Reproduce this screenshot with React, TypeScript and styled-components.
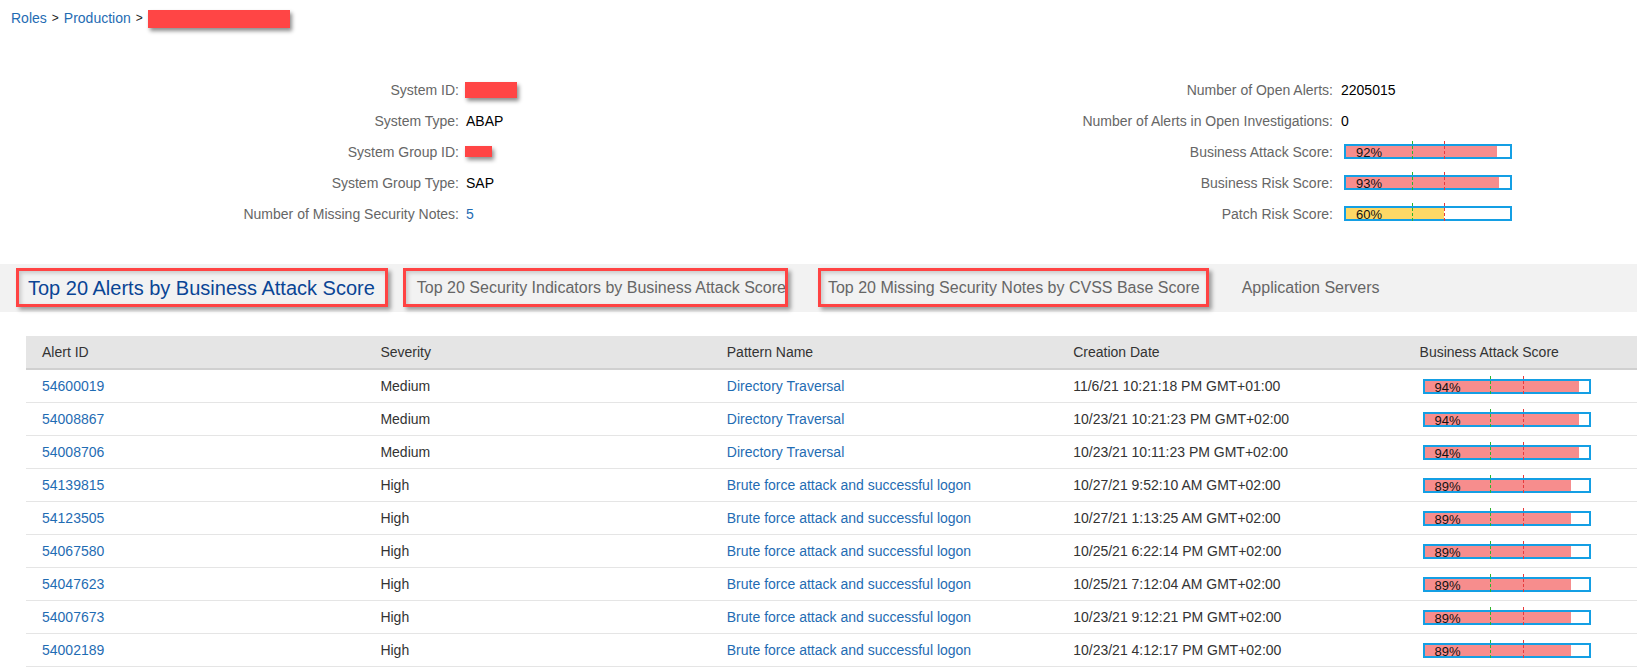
import React from "react";
import styled, { createGlobalStyle } from "styled-components";

const LINK = "#1f6cb3";

const GlobalStyle = createGlobalStyle`
  html, body {
    margin: 0;
    padding: 0;
    background: #ffffff;
  }
  body {
    font-family: "Liberation Sans", Arial, Helvetica, sans-serif;
    font-size: 14px;
    color: #333333;
    overflow: hidden;
  }
`;

const Page = styled.div`
  width: 1637px;
  height: 670px;
  overflow: hidden;
`;

/* ---------- breadcrumb ---------- */
const Breadcrumbs = styled.nav`
  display: flex;
  align-items: center;
  height: 36px;
  padding-left: 11px;
  box-sizing: border-box;
  font-size: 14px;
  line-height: 18px;
`;

const Crumb = styled.a`
  color: ${LINK};
  text-decoration: none;
`;

const Sep = styled.span`
  color: #222;
  font-size: 12px;
  margin: 0 5px;
`;

const Redacted = styled.span<{ $w: number; $h: number; $shift?: number }>`
  display: inline-block;
  width: ${(p) => p.$w}px;
  height: ${(p) => p.$h}px;
  margin-top: ${(p) => p.$shift ?? 0}px;
  margin-left: ${(p) => (p.$shift === undefined ? -1 : 0)}px;
  background: #ff4545;
  box-shadow: 2px 3px 4px rgba(0, 0, 0, 0.45);
`;

/* ---------- info section ---------- */
const InfoSection = styled.section`
  display: flex;
  margin-top: 38px;
`;

const InfoGrid = styled.div<{ $width: number; $labelWidth: number; $gap: number }>`
  width: ${(p) => p.$width}px;
  display: grid;
  grid-template-columns: ${(p) => p.$labelWidth}px 1fr;
  column-gap: ${(p) => p.$gap}px;
  grid-auto-rows: 31px;
  align-items: center;
`;

const Label = styled.div`
  text-align: right;
  color: #666666;
  white-space: nowrap;
`;

const Value = styled.div<{ $link?: boolean }>`
  display: flex;
  align-items: center;
  color: ${(p) => (p.$link ? LINK : "#000000")};
  white-space: nowrap;
`;

/* ---------- score bar ---------- */
const ScoreBar = styled.div`
  position: relative;
  width: 164px;
  height: 11px;
  margin-left: 3px;
  border: 2px solid #149fe4;
  background: #ffffff;
`;

const ScoreFill = styled.div<{ $color: string }>`
  height: 100%;
  background: ${(p) => p.$color};
`;

const ScoreText = styled.span`
  position: absolute;
  left: 10px;
  top: 0;
  font-size: 13px;
  line-height: 13px;
  color: #111111;
`;

const Threshold = styled.span<{ $at: number; $color: string }>`
  position: absolute;
  left: ${(p) => p.$at}%;
  top: -5px;
  bottom: -4px;
  width: 1px;
  background: repeating-linear-gradient(
    to bottom,
    ${(p) => p.$color} 0 3px,
    transparent 3px 5px
  );
`;

const Score: React.FC<{ value: number; color?: string }> = ({ value, color = "#f78d8d" }) => (
  <ScoreBar>
    <ScoreFill $color={color} style={{ width: `${value}%` }} />
    <ScoreText>{value}%</ScoreText>
    <Threshold $at={40} $color="#2db52d" />
    <Threshold $at={60} $color="#e8393d" />
  </ScoreBar>
);

/* ---------- tabs ---------- */
const TabBar = styled.div`
  margin-top: 35px;
  height: 48px;
  background: #f2f2f2;
  display: flex;
  align-items: stretch;
  padding-left: 7px;
`;

const Tab = styled.div<{ $selected?: boolean }>`
  position: relative;
  display: flex;
  align-items: center;
  padding: 0 21px;
  font-size: ${(p) => (p.$selected ? "20px" : "16px")};
  color: ${(p) => (p.$selected ? "#0a4595" : "#666666")};
  white-space: nowrap;
  cursor: pointer;
`;

const Highlight = styled.span<{ $l: number; $r: number }>`
  position: absolute;
  left: ${(p) => p.$l}px;
  right: ${(p) => p.$r}px;
  top: 4px;
  bottom: 5px;
  border: 3px solid #ff4343;
  box-shadow: 3px 3px 4px rgba(0, 0, 0, 0.35), inset 2px 2px 4px rgba(0, 0, 0, 0.18);
  pointer-events: none;
`;

/* ---------- table ---------- */
const Table = styled.div`
  margin: 24px 0 0 26px;
  width: 1732px;
`;

const HeaderRow = styled.div`
  display: grid;
  grid-template-columns: repeat(5, 346.4px);
  height: 32px;
  align-items: center;
  background: #e5e5e5;
  border-bottom: 2px solid #d0d0d0;
  color: #333333;
`;

const Row = styled.div`
  display: grid;
  grid-template-columns: repeat(5, 346.4px);
  height: 32px;
  align-items: center;
  border-bottom: 1px solid #e5e5e5;
`;

const Cell = styled.div<{ $first?: boolean; $link?: boolean }>`
  display: flex;
  align-items: center;
  padding-left: ${(p) => (p.$first ? 16 : 8)}px;
  color: ${(p) => (p.$link ? LINK : "#333333")};
  white-space: nowrap;
`;

const alerts = [
  ["54600019", "Medium", "Directory Traversal", "11/6/21 10:21:18 PM GMT+01:00", 94],
  ["54008867", "Medium", "Directory Traversal", "10/23/21 10:21:23 PM GMT+02:00", 94],
  ["54008706", "Medium", "Directory Traversal", "10/23/21 10:11:23 PM GMT+02:00", 94],
  ["54139815", "High", "Brute force attack and successful logon", "10/27/21 9:52:10 AM GMT+02:00", 89],
  ["54123505", "High", "Brute force attack and successful logon", "10/27/21 1:13:25 AM GMT+02:00", 89],
  ["54067580", "High", "Brute force attack and successful logon", "10/25/21 6:22:14 PM GMT+02:00", 89],
  ["54047623", "High", "Brute force attack and successful logon", "10/25/21 7:12:04 AM GMT+02:00", 89],
  ["54007673", "High", "Brute force attack and successful logon", "10/23/21 9:12:21 PM GMT+02:00", 89],
  ["54002189", "High", "Brute force attack and successful logon", "10/23/21 4:12:17 PM GMT+02:00", 89],
] as const;

export default function App() {
  return (
    <Page>
      <GlobalStyle />
      <Breadcrumbs>
        <Crumb href="#">Roles</Crumb>
        <Sep>&gt;</Sep>
        <Crumb href="#">Production</Crumb>
        <Sep>&gt;</Sep>
        <Redacted $w={142} $h={18} $shift={2} />
      </Breadcrumbs>

      <InfoSection>
        <InfoGrid $width={818} $labelWidth={459} $gap={7}>
          <Label>System ID:</Label>
          <Value>
            <Redacted $w={52} $h={16} />
          </Value>
          <Label>System Type:</Label>
          <Value>ABAP</Value>
          <Label>System Group ID:</Label>
          <Value>
            <Redacted $w={27} $h={11} />
          </Value>
          <Label>System Group Type:</Label>
          <Value>SAP</Value>
          <Label>Number of Missing Security Notes:</Label>
          <Value $link>5</Value>
        </InfoGrid>

        <InfoGrid $width={819} $labelWidth={515} $gap={8}>
          <Label>Number of Open Alerts:</Label>
          <Value>2205015</Value>
          <Label>Number of Alerts in Open Investigations:</Label>
          <Value>0</Value>
          <Label>Business Attack Score:</Label>
          <Value>
            <Score value={92} />
          </Value>
          <Label>Business Risk Score:</Label>
          <Value>
            <Score value={93} />
          </Value>
          <Label>Patch Risk Score:</Label>
          <Value>
            <Score value={60} color="#fdd866" />
          </Value>
        </InfoGrid>
      </InfoSection>

      <TabBar>
        <Tab $selected>
          Top 20 Alerts by Business Attack Score
          <Highlight $l={9} $r={8} />
        </Tab>
        <Tab>
          Top 20 Security Indicators by Business Attack Score
          <Highlight $l={7} $r={19} />
        </Tab>
        <Tab>
          Top 20 Missing Security Notes by CVSS Base Score
          <Highlight $l={11} $r={12} />
        </Tab>
        <Tab>Application Servers</Tab>
      </TabBar>

      <Table>
        <HeaderRow>
          <Cell $first>Alert ID</Cell>
          <Cell>Severity</Cell>
          <Cell>Pattern Name</Cell>
          <Cell>Creation Date</Cell>
          <Cell>Business Attack Score</Cell>
        </HeaderRow>
        {alerts.map(([id, sev, pattern, date, score]) => (
          <Row key={id}>
            <Cell $first $link>
              {id}
            </Cell>
            <Cell>{sev}</Cell>
            <Cell $link>{pattern}</Cell>
            <Cell>{date}</Cell>
            <Cell>
              <Score value={score} />
            </Cell>
          </Row>
        ))}
      </Table>
    </Page>
  );
}
